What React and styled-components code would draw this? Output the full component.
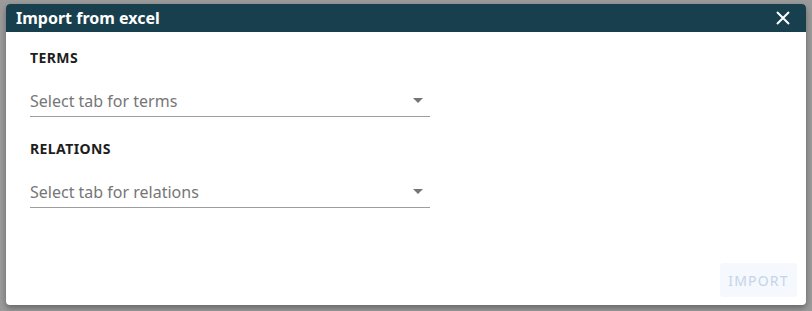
import styled, { createGlobalStyle } from 'styled-components'

const GlobalStyle = createGlobalStyle`
  html, body {
    margin: 0;
    padding: 0;
    background: #999999;
    font-family: 'Noto Sans', 'Open Sans', sans-serif;
  }
`

function CloseIcon() {
  return (
    <svg width='14' height='14' viewBox='0 0 14 14'>
      <path d='M1 1 L13 13 M13 1 L1 13' stroke='#fff' strokeWidth='2' />
    </svg>
  )
}

function Select({ placeholder }) {
  return (
    <SelectBox>
      <Placeholder>{placeholder}</Placeholder>
      <Arrow />
    </SelectBox>
  )
}

export default function App() {
  return (
    <Backdrop>
      <GlobalStyle />
      <Dialog>
        <Header>
          <Title>Import from excel</Title>
          <CloseButton aria-label='close'>
            <CloseIcon />
          </CloseButton>
        </Header>
        <Body>
          <Label>TERMS</Label>
          <Select placeholder='Select tab for terms' />
          <Label $gap>RELATIONS</Label>
          <Select placeholder='Select tab for relations' />
        </Body>
        <Footer>
          <ImportButton disabled>IMPORT</ImportButton>
        </Footer>
      </Dialog>
    </Backdrop>
  )
}

const Backdrop = styled.div`
  width: 812px;
  height: 311px;
  padding: 4px 6px 6px;
  box-sizing: border-box;
  background: #9b9b9b;
`

const Dialog = styled.div`
  width: 800px;
  height: 301px;
  display: flex;
  flex-direction: column;
  background: #fff;
  border-radius: 4px;
  overflow: hidden;
  box-shadow: 0 3px 6px rgba(0, 0, 0, 0.35);
`

const Header = styled.div`
  height: 28px;
  flex-shrink: 0;
  display: flex;
  align-items: center;
  justify-content: space-between;
  padding: 0 16px 0 10px;
  background: #173f4d;
`

const Title = styled.h2`
  margin: 0;
  font-size: 16px;
  font-weight: 700;
  color: #fff;
`

const CloseButton = styled.button`
  border: 0;
  padding: 0;
  background: none;
  display: flex;
  cursor: pointer;
`

const Body = styled.div`
  flex: 1;
  padding: 16px 24px 0;
  display: flex;
  flex-direction: column;
`

const Label = styled.div`
  height: 20px;
  line-height: 20px;
  margin-top: ${(p) => (p.$gap ? '22px' : '0')};
  margin-bottom: 17px;
  font-size: 14px;
  font-weight: 700;
  letter-spacing: 0.4px;
  color: #1e1e1e;
`

const SelectBox = styled.div`
  width: 400px;
  height: 31px;
  display: flex;
  align-items: center;
  justify-content: space-between;
  border-bottom: 1px solid #9e9e9e;
`

const Placeholder = styled.span`
  font-size: 16px;
  color: #767676;
`

const Arrow = styled.span`
  width: 0;
  height: 0;
  margin-right: 7px;
  border-left: 5px solid transparent;
  border-right: 5px solid transparent;
  border-top: 5px solid #757575;
`

const Footer = styled.div`
  display: flex;
  justify-content: flex-end;
  padding: 0 9px 8px;
`

const ImportButton = styled.button`
  width: 77px;
  height: 34px;
  border: 0;
  border-radius: 4px;
  background: #f5f8fd;
  color: #c4d4ea;
  font-family: 'Noto Sans', sans-serif;
  font-size: 14px;
  letter-spacing: 1.2px;
`
